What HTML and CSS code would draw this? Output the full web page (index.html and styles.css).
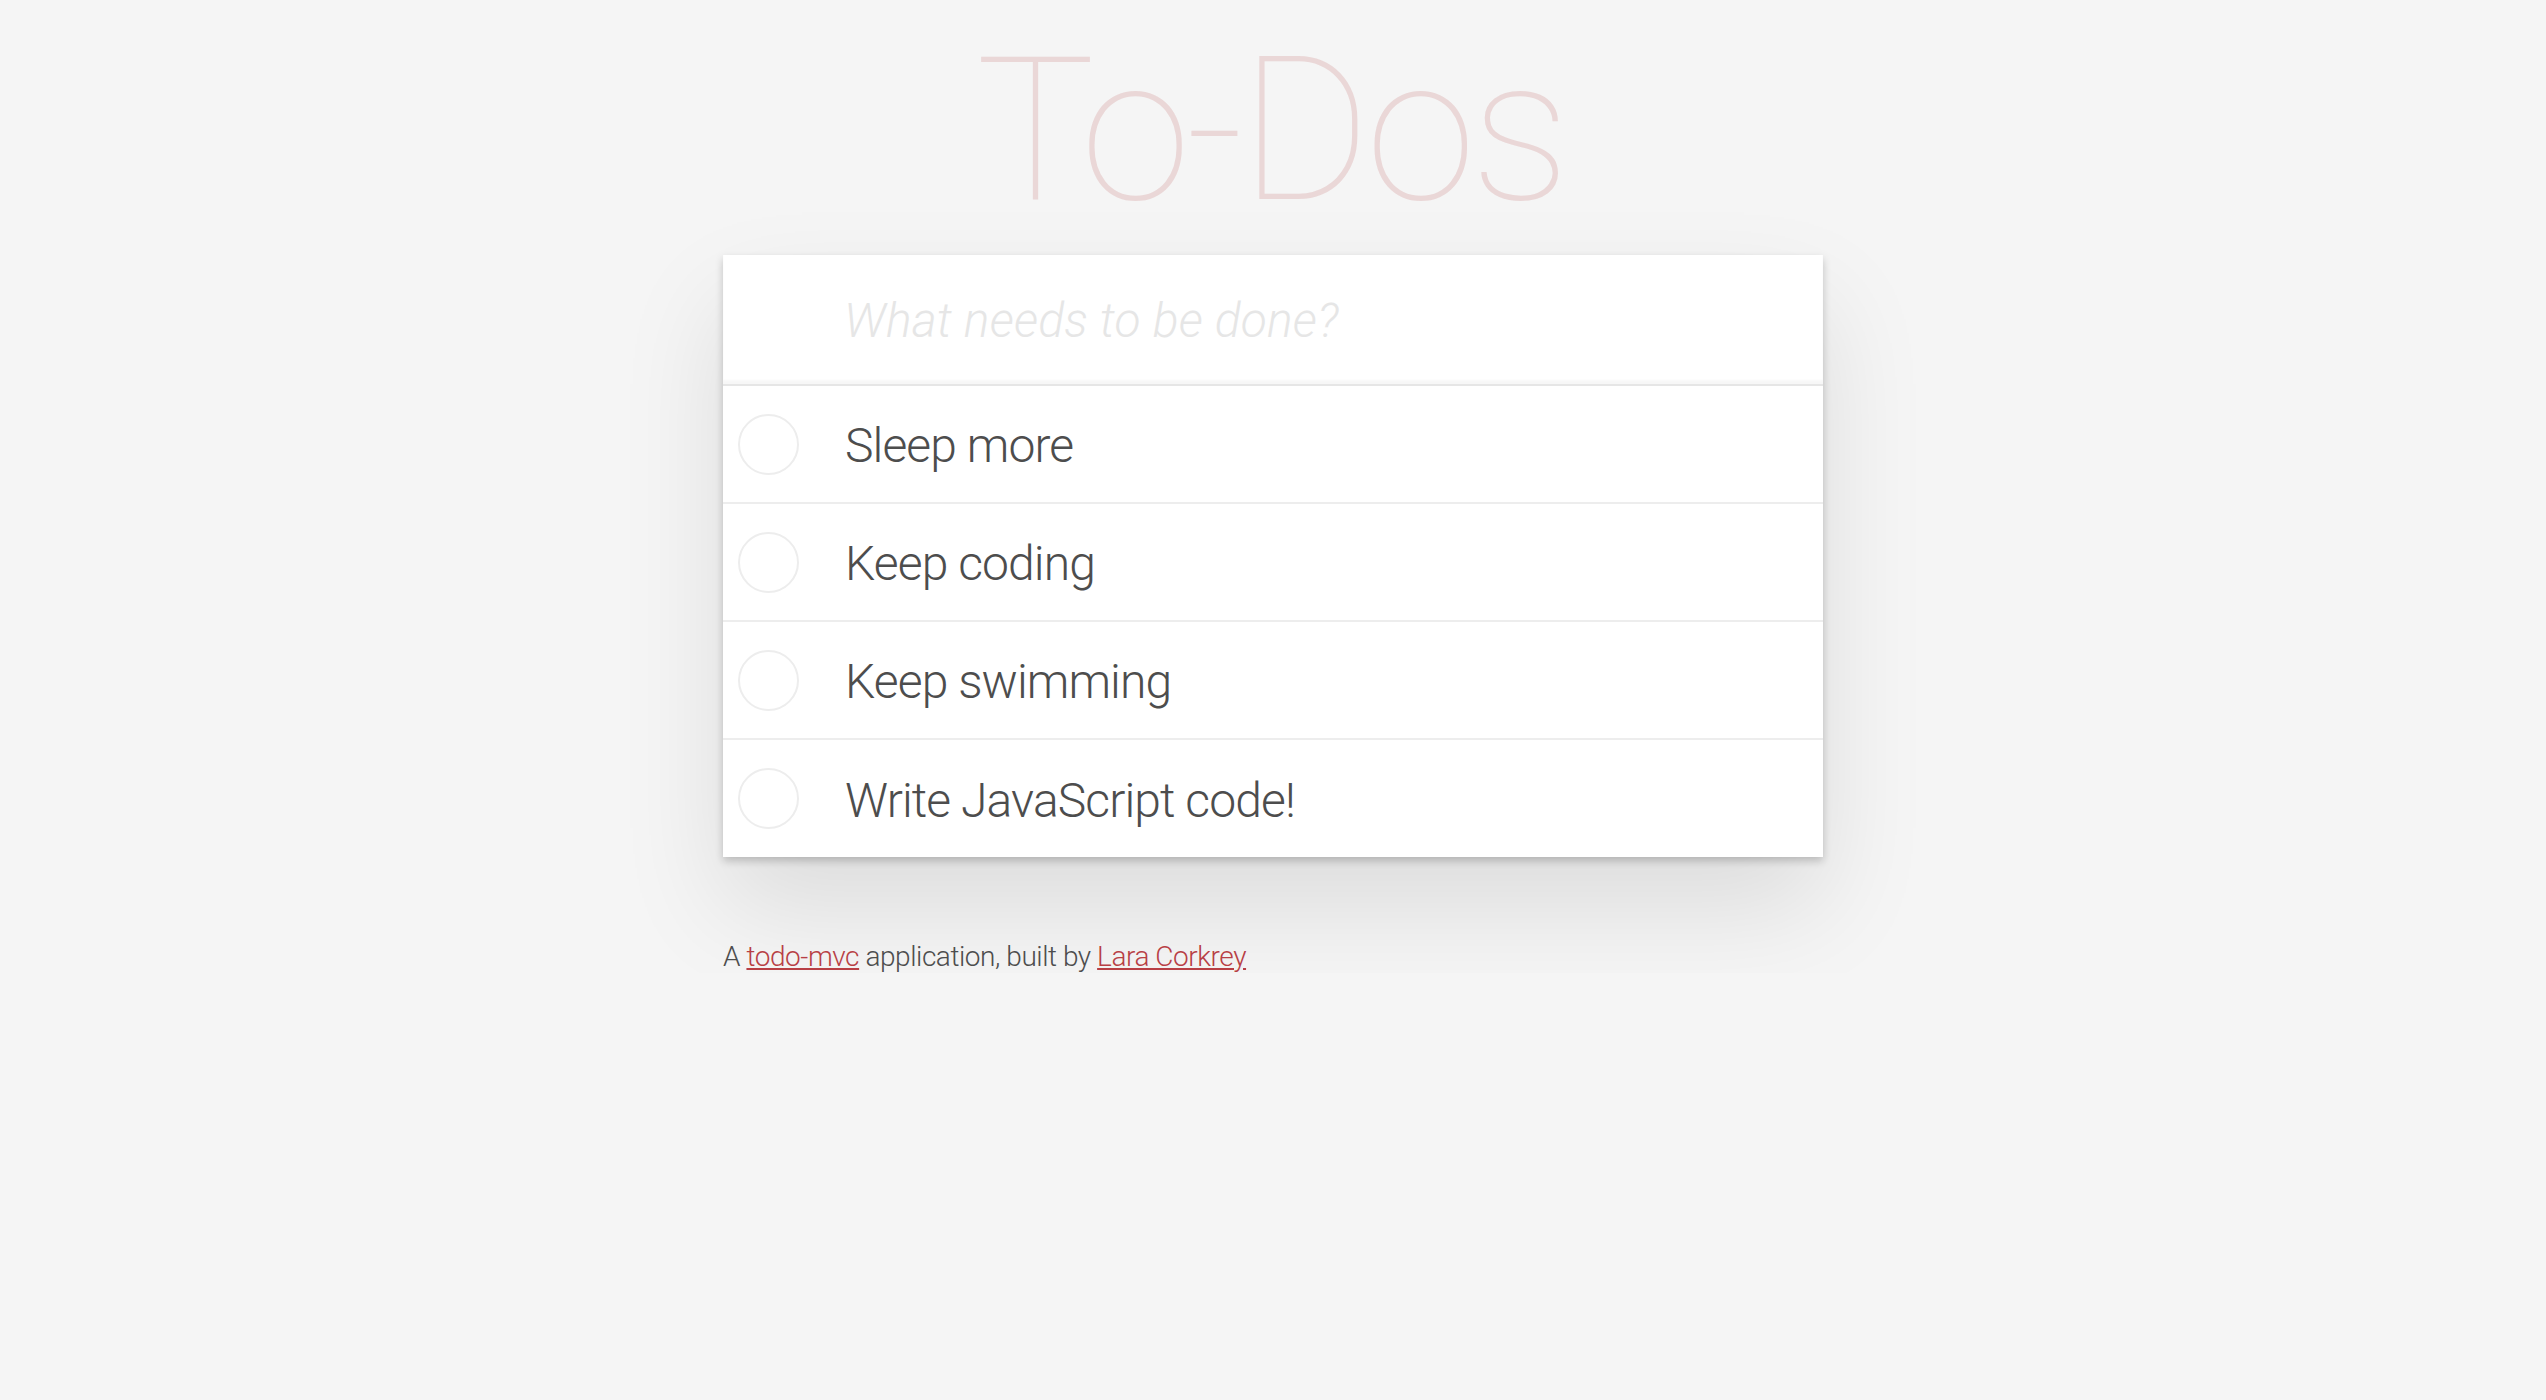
FILE: index.html
```html
<!DOCTYPE html>
<html lang="en">
<head>
<meta charset="utf-8">
<title>To-Dos</title>
<link rel="stylesheet" href="styles.css">
</head>
<body>
<div class="app">
  <h1 class="title">To-Dos</h1>
  <section class="card">
    <input class="new-todo" type="text" placeholder="What needs to be done?">
    <ul class="todo-list">
      <li class="todo"><span class="toggle"></span><span class="label">Sleep more</span></li>
      <li class="todo"><span class="toggle"></span><span class="label">Keep coding</span></li>
      <li class="todo"><span class="toggle"></span><span class="label">Keep swimming</span></li>
      <li class="todo"><span class="toggle"></span><span class="label">Write JavaScript code!</span></li>
    </ul>
  </section>
  <p class="info">A <a href="#">todo-mvc</a> application, built by <a href="#">Lara Corkrey</a></p>
</div>
</body>
</html>
```

FILE: styles.css
```css
* { box-sizing: border-box; }

html, body {
  margin: 0;
  padding: 0;
}

body {
  background: #f5f5f5;
  color: #4d4d4d;
  font-family: Roboto, "Liberation Sans", Arial, sans-serif;
  font-weight: 300;
}

.app {
  width: 1100px;
  margin: 0 auto;
  display: flex;
  flex-direction: column;
}

.title {
  margin: 31px 0 24px;
  font-size: 200px;
  line-height: 200px;
  font-weight: 100;
  letter-spacing: -5px;
  text-indent: -5px;
  text-align: center;
  color: rgba(175, 47, 47, 0.15);
}

.card {
  background: #fff;
  box-shadow: 0 4px 8px 0 rgba(0, 0, 0, 0.2), 0 50px 100px 0 rgba(0, 0, 0, 0.1);
  display: flex;
  flex-direction: column;
}

.new-todo {
  display: block;
  width: 100%;
  height: 131px;
  margin: 0;
  padding: 1px 32px 0 121px;
  border: none;
  border-bottom: 2px solid #e6e6e6;
  background: transparent;
  outline: none;
  font-family: inherit;
  font-size: 48px;
  font-weight: 300;
  letter-spacing: 0.2px;
  color: #4d4d4d;
  box-shadow: inset 0 -4px 2px rgba(0, 0, 0, 0.03);
}

.new-todo::placeholder {
  font-style: italic;
  font-weight: 300;
  color: #e6e6e6;
}

.todo-list {
  list-style: none;
  margin: 0;
  padding: 0;
}

.todo {
  display: flex;
  align-items: center;
  gap: 46px;
  height: 118px;
  padding-left: 15px;
  border-bottom: 2px solid #ededed;
}

.todo:last-child {
  height: 117px;
  border-bottom: none;
}

.toggle {
  flex: none;
  width: 61px;
  height: 61px;
  border: 2px solid #ededed;
  border-radius: 50%;
}

.label {
  padding-top: 4px;
  font-size: 48px;
  font-weight: 300;
  letter-spacing: -0.9px;
  color: #4d4d4d;
  line-height: 1.2;
}

.info {
  margin: 83px 0 0;
  font-size: 28px;
  font-weight: 300;
  letter-spacing: -0.45px;
  color: #4d4d4d;
}

.info a {
  color: #b83f45;
  text-decoration: underline;
}
```
